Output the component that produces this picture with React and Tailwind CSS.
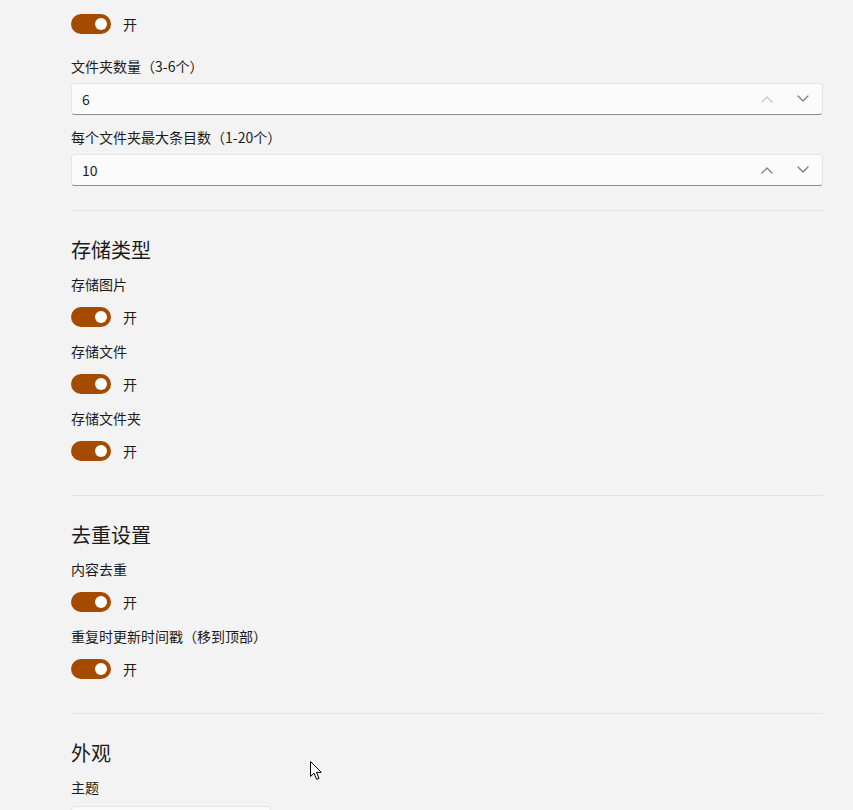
import React from "react";

const FONT = { fontFamily: '"Noto Sans CJK SC", "Noto Sans", sans-serif' };

function Toggle() {
  return (
    <div className="flex h-8 items-center mt-[7px]">
      <div className="relative h-5 w-10 rounded-full bg-[#a54b00]">
        <div className="absolute right-[4px] top-[4px] h-3 w-3 rounded-full bg-white" />
      </div>
      <span className="ml-3 text-[14px] leading-5 text-[#1b1b1b]">开</span>
    </div>
  );
}

function Label({ children, className = "" }) {
  return <div className={`h-5 text-[14px] leading-5 text-[#1b1b1b] ${className}`}>{children}</div>;
}

function Chevron({ up, color }) {
  return (
    <svg width="12" height="8" viewBox="0 0 12 8" fill="none">
      <polyline
        points={up ? "1,7 6,2 11,7" : "1,1 6,6 11,1"}
        stroke={color}
        strokeWidth="1.2"
        strokeLinecap="round"
        strokeLinejoin="round"
      />
    </svg>
  );
}

function NumberBox({ value, upColor }) {
  return (
    <div className="mt-[7px] flex h-8 items-center rounded-[4px] border border-[#e5e5e5] border-b-[#8d8d8d] bg-[#fbfbfb] pl-[10px] pr-[13px]">
      <span className="flex-1 text-[14px] leading-5 text-[#1b1b1b]">{value}</span>
      <div className="flex items-center gap-6">
        <Chevron up color={upColor} />
        <Chevron color="#7a7a7a" />
      </div>
    </div>
  );
}

function Divider({ className = "" }) {
  return <div className={`h-px bg-[#e3e3e3] ${className}`} />;
}

function Heading({ children }) {
  return (
    <div className="mt-[25px] h-7 text-[20px] leading-7 font-normal text-[#1b1b1b]">{children}</div>
  );
}

function Setting({ label, first }) {
  return (
    <>
      <Label className={first ? "mt-[10px]" : "mt-[8px]"}>{label}</Label>
      <Toggle />
    </>
  );
}

export default function App() {
  return (
    <div className="relative h-[810px] w-full overflow-hidden bg-[#f3f3f3]" style={FONT}>
      <div className="pl-[71px] pr-[30px] pt-[1px]">
        <Toggle />
        <Label className="mt-[16px]">文件夹数量（3-6个）</Label>
        <NumberBox value="6" upColor="#c4c4c4" />
        <Label className="mt-[12px]">每个文件夹最大条目数（1-20个）</Label>
        <NumberBox value="10" upColor="#7a7a7a" />
        <Divider className="mt-[24px]" />

        <Heading>存储类型</Heading>
        <Setting label="存储图片" first />
        <Setting label="存储文件" />
        <Setting label="存储文件夹" />
        <Divider className="mt-[28px]" />

        <Heading>去重设置</Heading>
        <Setting label="内容去重" first />
        <Setting label="重复时更新时间戳（移到顶部）" />
        <Divider className="mt-[28px]" />

        <Heading>外观</Heading>
        <Label className="mt-[10px]">主题</Label>
        <div className="mt-[9px] h-8 w-[200px] rounded-[4px] border border-[#e5e5e5] bg-[#fbfbfb]" />
      </div>

      <svg className="absolute left-[310px] top-[761px]" width="13" height="20" viewBox="0 0 13 20">
        <path
          d="M0.5 0.5 L0.5 15.5 L4 12.2 L6.6 18.3 L9 17.3 L6.5 11.3 L11.3 11.3 Z"
          fill="white"
          stroke="black"
          strokeWidth="1"
          strokeLinejoin="round"
        />
      </svg>
    </div>
  );
}
